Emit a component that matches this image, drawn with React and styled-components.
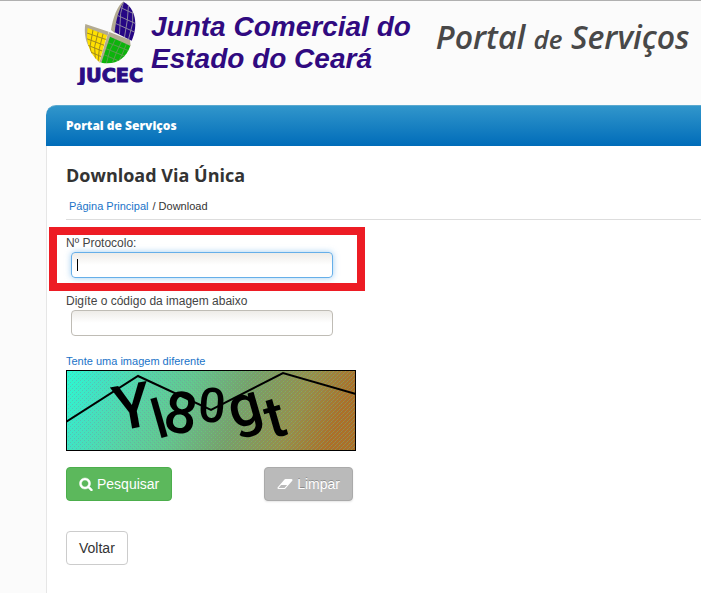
import React from "react";
import styled, { createGlobalStyle, css } from "styled-components";

const GlobalStyle = createGlobalStyle`
  * {
    box-sizing: border-box;
  }
  body {
    margin: 0;
    background: #fbfbfb;
    color: #333;
    font-family: "Liberation Sans", Arial, sans-serif;
    font-size: 12px;
    line-height: 16px;
  }
`;

const sails = [
  {
    id: "blue",
    shape: "M149 6C184 24 194 74 173 122L122 97C126 58 134 30 149 6Z",
    fill: "#260684",
    line: "#8c84a0",
    grid: "M138 22L190 46M130 46L192 74M124 70L190 100M150 0L140 40L136 110M164 10L160 60L150 120M176 30L176 70L162 124",
  },
  {
    id: "yellow",
    shape: "M41 84L99 106L76 186C48 164 33 126 41 84Z",
    fill: "#ffe000",
    line: "#a08a1c",
    grid: "M36 98L100 120M38 116L96 138M42 136L92 156M50 156L86 172M58 84L48 140L54 170M74 90L62 140L64 180M88 98L76 146L72 186",
  },
  {
    id: "green",
    shape: "M108 110L169 137C156 176 124 196 82 188Z",
    fill: "#0cb40c",
    line: "#5c9c50",
    grid: "M102 128L164 152M96 146L156 170M90 164L142 186M126 114L108 150L96 194M144 122L128 156L112 196M158 130L144 164L130 192",
  },
];

const Logo = () => (
  <LogoSvg viewBox="0 3 222 252" role="img" aria-label="JUCEC">
    <g fill="#b3ab92">
      <path d="M149 4C130 16 116 56 111 90L122 99L152 12Z" />
      <path d="M34 72L104 95L100 110L42 90L44 140C34 120 30 96 34 72Z" />
      <path d="M106 96L168 120L170 138L110 116L84 186L76 188L98 112Z" />
    </g>
    {sails.map(({ id, shape, fill, line, grid }) => (
      <g key={id}>
        <clipPath id={`sail-${id}`}>
          <path d={shape} />
        </clipPath>
        <path d={shape} fill={fill} />
        <path d={grid} fill="none" stroke={line} strokeWidth="3" clipPath={`url(#sail-${id})`} />
      </g>
    ))}
    <LogoText x="111" y="247" textAnchor="middle">
      JUCEC
    </LogoText>
  </LogoSvg>
);

// x, y is the middle of the letter, drop is the distance from there to its baseline
const letters = [
  { char: "Y", x: 66, y: 36, size: 62, drop: 22, turn: -10 },
  { char: "l", x: 93, y: 48, size: 54, drop: 20, turn: -16 },
  { char: "8", x: 115, y: 42, size: 58, drop: 21, turn: 8 },
  { char: "0", x: 146, y: 35, size: 48, drop: 17, turn: 4 },
  { char: "g", x: 181, y: 46, size: 58, drop: 9, turn: -16 },
  { char: "t", x: 209, y: 48, size: 58, drop: 19, turn: -16 },
];

const Captcha = () => (
  <CaptchaSvg viewBox="0 0 290 81" role="img" aria-label="Código da imagem">
    <defs>
      <linearGradient id="shade" x1="0" y1="0" x2="1" y2="0.12">
        <stop offset="0" stopColor="#28fcd4" />
        <stop offset="0.12" stopColor="#3ee4c6" />
        <stop offset="0.28" stopColor="#55d4a8" />
        <stop offset="0.45" stopColor="#64c48e" />
        <stop offset="0.65" stopColor="#78a068" />
        <stop offset="0.85" stopColor="#988e48" />
        <stop offset="1" stopColor="#ac7028" />
      </linearGradient>
      <pattern id="dither" width="4" height="4" patternUnits="userSpaceOnUse">
        <path d="M0 0h1v1H0zM2 2h1v1H2z" fill="#7c8c9c" opacity="0.4" />
        <path d="M3 1h1v1H3zM1 3h1v1H1z" fill="#60e890" opacity="0.3" />
      </pattern>
    </defs>
    <rect width="290" height="81" fill="url(#shade)" />
    <rect width="290" height="81" fill="url(#dither)" />
    <path d="M0 52L72 6L145 40L217 3L290 24" fill="none" stroke="#000" strokeWidth="2" />
    {letters.map(({ char, x, y, size, drop, turn }) => (
      <CaptchaLetter
        key={char}
        y={drop}
        fontSize={size}
        textAnchor="middle"
        transform={`translate(${x} ${y}) rotate(${turn})`}
      >
        {char}
      </CaptchaLetter>
    ))}
    <rect x="0.5" y="0.5" width="289" height="80" fill="none" stroke="#000" />
  </CaptchaSvg>
);

const SearchIcon = () => (
  <Icon viewBox="0 0 1792 1792" aria-hidden="true">
    <path
      d="M1216 832q0-185-131.5-316.5t-316.5-131.5-316.5 131.5-131.5 316.5 131.5 316.5 316.5 131.5 316.5-131.5 131.5-316.5zm512 832q0 52-38 90t-90 38q-54 0-90-38l-343-342q-179 124-399 124-143 0-273.5-55.5t-225-150-150-225-55.5-273.5 55.5-273.5 150-225 225-150 273.5-55.5 273.5 55.5 225 150 150 225 55.5 273.5q0 220-124 399l343 343q37 37 37 90z"
      stroke="currentColor"
      strokeWidth="60"
    />
  </Icon>
);

const EraserIcon = () => (
  <Icon $wide viewBox="0 0 1920 1792" aria-hidden="true">
    <path d="M896 1408l336-384h-768l-336 384h768zM1909 331q15 34 9.5 71.5t-30.5 65.5l-896 1024q-38 44-96 44h-768q-38 0-69.5-20.5t-47.5-54.5q-15-34-9.5-71.5t30.5-65.5l896-1024q38-44 96-44h768q38 0 69.5 20.5t47.5 54.5z" />
  </Icon>
);

const App = () => {
  return (
    <Page>
      <GlobalStyle />
      <Header>
        <Logo />
        <Organization>
          Junta Comercial do
          <br />
          Estado do Ceará
        </Organization>
        <PortalName>
          Portal <small>de</small> Serviços
        </PortalName>
      </Header>

      <Panel>
        <PanelBar>Portal de Serviços</PanelBar>
        <Content>
          <Title>Download Via Única</Title>
          <Breadcrumb>
            <Link href="#">Página Principal</Link>
            <span>/ Download</span>
          </Breadcrumb>

          <form onSubmit={(e) => e.preventDefault()}>
            <Highlight>
              <Label htmlFor="protocolo">Nº Protocolo:</Label>
              <Input id="protocolo" type="text" placeholder=" " autoFocus />
            </Highlight>
            <Field>
              <Label htmlFor="codigo">Digíte o código da imagem abaixo</Label>
              <Input id="codigo" type="text" placeholder=" " />
            </Field>

            <CaptchaBlock>
              <Link href="#">Tente uma imagem diferente</Link>
              <Captcha />
            </CaptchaBlock>

            <Actions>
              <Button type="submit" $variant="success">
                <SearchIcon />
                Pesquisar
              </Button>
              <Button type="reset" $variant="muted">
                <EraserIcon />
                Limpar
              </Button>
            </Actions>
            <Button type="button">Voltar</Button>
          </form>
        </Content>
      </Panel>
    </Page>
  );
};

const Page = styled.div`
  min-height: 100vh;
  display: flex;
  flex-direction: column;
  border-top: 1px solid #b0b0b0;
`;

const Header = styled.header`
  height: 104px;
  display: flex;
  align-items: flex-start;
  padding-left: 74px;
  white-space: nowrap;
  overflow: hidden;
`;

const LogoSvg = styled.svg`
  width: 74px;
  height: 84px;
  flex-shrink: 0;
`;

const LogoText = styled.text`
  font-family: "DejaVu Sans", sans-serif;
  font-size: 58px;
  font-weight: 700;
  fill: #2b0c84;
  stroke: #2b0c84;
  stroke-width: 3px;
`;

const Organization = styled.div`
  margin: 10px 0 0 3px;
  color: #300a80;
  font-size: 28px;
  font-weight: 700;
  font-style: italic;
  line-height: 32px;
`;

const PortalName = styled.div`
  margin: 15px 0 0 25px;
  color: #484848;
  font-family: "Open Sans", sans-serif;
  font-size: 32px;
  font-weight: 600;
  font-style: italic;
  line-height: 42px;

  small {
    font-size: 26px;
  }
`;

const Panel = styled.main`
  flex: 1;
  margin-left: 46px;
  background: #fff;
  border-left: 1px solid #e6e6e6;
  border-top-left-radius: 10px;
`;

const PanelBar = styled.div`
  margin-left: -1px;
  padding: 0 20px;
  border-top: 1px solid #5aa9cf;
  border-top-left-radius: 10px;
  background: linear-gradient(#3196cb, #006cb9);
  color: #fff;
  font-family: "Open Sans", sans-serif;
  font-size: 12px;
  font-weight: 800;
  line-height: 40px;
`;

const Content = styled.div`
  padding: 17px 0 28px 19px;
`;

const Title = styled.h1`
  margin: 0 0 11px;
  font-family: "Open Sans", sans-serif;
  font-size: 18px;
  font-weight: 700;
  line-height: 24px;
`;

const Breadcrumb = styled.nav`
  display: flex;
  gap: 4px;
  padding: 0 3px 5px;
  margin-bottom: 7px;
  border-bottom: 1px solid #ddd;
  font-size: 11px;
`;

const Link = styled.a`
  color: #1a73c8;
  font-size: 11px;
  text-decoration: none;
`;

const Field = styled.div`
  display: flex;
  flex-direction: column;
  gap: 1px;
  max-width: 267px;
  margin-top: 2px;
`;

const Highlight = styled(Field)`
  max-width: 316px;
  margin: 0 0 0 -17px;
  padding: 0 24px 5px 9px;
  border: 8px solid #ed1c24;
`;

const Label = styled.label`
  color: #444;
  font-size: 12px;
`;

const Input = styled.input`
  height: 26px;
  margin-left: 5px;
  padding: 0 5px;
  border: 1px solid #bfbcb5;
  border-radius: 4px;
  outline: none;
  background: linear-gradient(#eeece8, #fff 50%);
  font: inherit;

  &:focus {
    border-color: #66afe9;
    box-shadow: 0 0 6px rgba(102, 175, 233, 0.6);
  }

  /* steady text cursor while the box is empty */
  &:focus:placeholder-shown {
    caret-color: transparent;
    background: linear-gradient(#000, #000) 5px 6px / 1px 12px no-repeat,
      linear-gradient(#eeece8, #fff 50%);
  }
`;

const CaptchaBlock = styled.div`
  display: flex;
  flex-direction: column;
  align-items: flex-start;
  gap: 1px;
  margin: 17px 0 16px;
`;

const CaptchaSvg = styled.svg`
  width: 290px;
  height: 81px;
`;

const CaptchaLetter = styled.text`
  font-family: Roboto, sans-serif;
  font-weight: 500;
  fill: #000;
`;

const Actions = styled.div`
  display: flex;
  justify-content: space-between;
  max-width: 287px;
  margin-bottom: 30px;
`;

const Button = styled.button`
  display: flex;
  align-items: center;
  gap: 4px;
  padding: 6px 12px;
  border: 1px solid #ccc;
  border-radius: 4px;
  background: #fff;
  color: #333;
  font-family: inherit;
  font-size: 14px;
  line-height: 20px;
  cursor: pointer;

  ${({ $variant }) =>
    $variant === "success" &&
    css`
      background: #5cb85c;
      border-color: #4cae4c;
      color: #fff;
    `}

  ${({ $variant }) =>
    $variant === "muted" &&
    css`
      background: #bababa;
      border-color: #aaa;
      color: #fff;
      text-shadow: 0 -1px 0 rgba(0, 0, 0, 0.25);
      box-shadow: 0 1px 2px rgba(0, 0, 0, 0.1);
    `}
`;

const Icon = styled.svg`
  width: ${({ $wide }) => ($wide ? "16px" : "14px")};
  height: 14px;
  fill: currentColor;
`;

export default App;
